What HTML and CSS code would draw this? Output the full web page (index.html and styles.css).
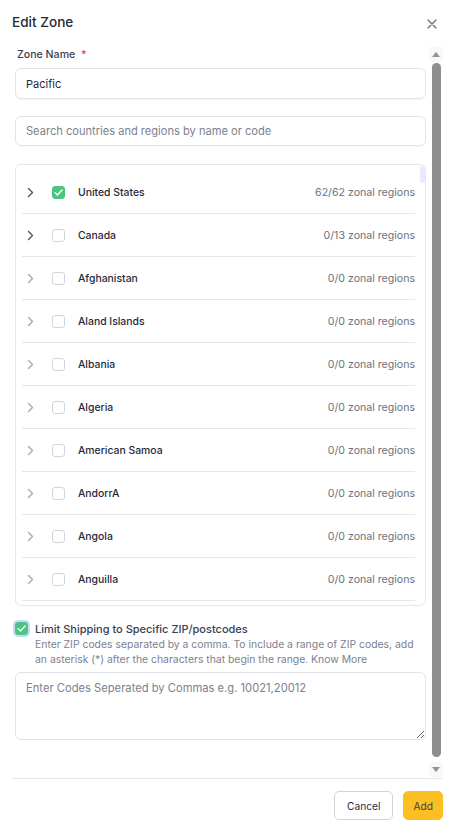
FILE: index.html
```html
<!DOCTYPE html>
<html>
<head>
<meta charset="utf-8">
<link rel="stylesheet" href="styles.css">
</head>
<body>
<div class="modal">
  <div class="header">
    <h1 class="title">Edit Zone</h1>
    <button class="close" aria-label="Close">
      <svg width="10" height="10" viewBox="0 0 10 10"><path d="M1 1L9 9M9 1L1 9" stroke="#6b7280" stroke-width="1.4" stroke-linecap="round"/></svg>
    </button>
  </div>
  <div class="main">
    <div class="content">
      <label class="label">Zone Name <span class="req">*</span></label>
      <div class="input">Pacific</div>
      <div class="input search">Search countries and regions by name or code</div>
      <div class="card">
        <div class="list">
          <div class="row"><span class="chev dark"><svg width="7" height="11" viewBox="0 0 7 11"><path d="M1.5 1.5L5.5 5.5L1.5 9.5" fill="none" stroke="currentColor" stroke-width="1.4" stroke-linecap="round" stroke-linejoin="round"/></svg></span><span class="cb checked"><svg width="9" height="7" viewBox="0 0 9 7"><path d="M1 3.6L3.4 6L8 1" fill="none" stroke="#fff" stroke-width="1.3" stroke-linecap="round" stroke-linejoin="round"/></svg></span><span class="name">United States</span><span class="count">62/62 zonal regions</span></div>
          <div class="row"><span class="chev dark"><svg width="7" height="11" viewBox="0 0 7 11"><path d="M1.5 1.5L5.5 5.5L1.5 9.5" fill="none" stroke="currentColor" stroke-width="1.4" stroke-linecap="round" stroke-linejoin="round"/></svg></span><span class="cb"></span><span class="name">Canada</span><span class="count">0/13 zonal regions</span></div>
          <div class="row"><span class="chev"><svg width="7" height="11" viewBox="0 0 7 11"><path d="M1.5 1.5L5.5 5.5L1.5 9.5" fill="none" stroke="currentColor" stroke-width="1.4" stroke-linecap="round" stroke-linejoin="round"/></svg></span><span class="cb"></span><span class="name">Afghanistan</span><span class="count">0/0 zonal regions</span></div>
          <div class="row"><span class="chev"><svg width="7" height="11" viewBox="0 0 7 11"><path d="M1.5 1.5L5.5 5.5L1.5 9.5" fill="none" stroke="currentColor" stroke-width="1.4" stroke-linecap="round" stroke-linejoin="round"/></svg></span><span class="cb"></span><span class="name">Aland Islands</span><span class="count">0/0 zonal regions</span></div>
          <div class="row"><span class="chev"><svg width="7" height="11" viewBox="0 0 7 11"><path d="M1.5 1.5L5.5 5.5L1.5 9.5" fill="none" stroke="currentColor" stroke-width="1.4" stroke-linecap="round" stroke-linejoin="round"/></svg></span><span class="cb"></span><span class="name">Albania</span><span class="count">0/0 zonal regions</span></div>
          <div class="row"><span class="chev"><svg width="7" height="11" viewBox="0 0 7 11"><path d="M1.5 1.5L5.5 5.5L1.5 9.5" fill="none" stroke="currentColor" stroke-width="1.4" stroke-linecap="round" stroke-linejoin="round"/></svg></span><span class="cb"></span><span class="name">Algeria</span><span class="count">0/0 zonal regions</span></div>
          <div class="row"><span class="chev"><svg width="7" height="11" viewBox="0 0 7 11"><path d="M1.5 1.5L5.5 5.5L1.5 9.5" fill="none" stroke="currentColor" stroke-width="1.4" stroke-linecap="round" stroke-linejoin="round"/></svg></span><span class="cb"></span><span class="name">American Samoa</span><span class="count">0/0 zonal regions</span></div>
          <div class="row"><span class="chev"><svg width="7" height="11" viewBox="0 0 7 11"><path d="M1.5 1.5L5.5 5.5L1.5 9.5" fill="none" stroke="currentColor" stroke-width="1.4" stroke-linecap="round" stroke-linejoin="round"/></svg></span><span class="cb"></span><span class="name">AndorrA</span><span class="count">0/0 zonal regions</span></div>
          <div class="row"><span class="chev"><svg width="7" height="11" viewBox="0 0 7 11"><path d="M1.5 1.5L5.5 5.5L1.5 9.5" fill="none" stroke="currentColor" stroke-width="1.4" stroke-linecap="round" stroke-linejoin="round"/></svg></span><span class="cb"></span><span class="name">Angola</span><span class="count">0/0 zonal regions</span></div>
          <div class="row"><span class="chev"><svg width="7" height="11" viewBox="0 0 7 11"><path d="M1.5 1.5L5.5 5.5L1.5 9.5" fill="none" stroke="currentColor" stroke-width="1.4" stroke-linecap="round" stroke-linejoin="round"/></svg></span><span class="cb"></span><span class="name">Anguilla</span><span class="count">0/0 zonal regions</span></div>
        </div>
        <span class="list-thumb"></span>
      </div>
      <div class="limit">
        <span class="cb checked focus"><svg width="9" height="7" viewBox="0 0 9 7"><path d="M1 3.6L3.4 6L8 1" fill="none" stroke="#fff" stroke-width="1.3" stroke-linecap="round" stroke-linejoin="round"/></svg></span>
        <div class="limit-text">
          <div class="limit-title">Limit Shipping to Specific ZIP/postcodes</div>
          <div class="limit-desc">Enter ZIP codes separated by a comma. To include a range of ZIP codes, add an asterisk (*) after the characters that begin the range. Know More</div>
        </div>
      </div>
      <textarea class="textarea" placeholder="Enter Codes Seperated by Commas e.g. 10021,20012"></textarea>
    </div>
    <div class="scrollbar" aria-hidden="true">
      <span class="sb-btn"><span class="arrow up"></span></span>
      <span class="sb-thumb"></span>
      <span class="sb-btn"><span class="arrow down"></span></span>
    </div>
  </div>
  <div class="footer">
    <button class="btn cancel">Cancel</button>
    <button class="btn add">Add</button>
  </div>
</div>
</body>
</html>
```
FILE: styles.css
```css
* { box-sizing: border-box; }
html, body { margin: 0; padding: 0; background: #fff; }
body { font-family: Inter, "Noto Sans", "Liberation Sans", sans-serif; color: #1f2937; }
.modal { width: 455px; height: 831px; display: flex; flex-direction: column; padding: 0 12px; }
.header { height: 45px; flex: none; display: flex; align-items: flex-start; justify-content: space-between; }
.title { margin: 13px 0 0 0; font-size: 13.6px; font-weight: 500; color: #1f2937; line-height: 18px; }
.close { margin: 19px 6px 0 0; padding: 0; border: 0; background: none; width: 10px; height: 10px; display: flex; }
.main { height: 733px; flex: none; display: flex; }
.content { flex: 1; min-width: 0; overflow: hidden; padding: 3px 3px 0 3px; display: flex; flex-direction: column; }
.label { font-size: 10.6px; font-weight: 500; color: #374151; line-height: 14px; padding-left: 2px; }
.req { color: #ef4444; margin-left: 3px; }
.input { margin-top: 6px; height: 31px; flex: none; border: 1px solid #e0e3e8; border-radius: 6px; font-size: 11px; color: #1f2937; padding: 0 10px; display: flex; align-items: center; box-shadow: 0 1px 1px rgba(0,0,0,0.03); }
.search { margin-top: 17px; height: 30px; color: #7b8190; font-size: 11.1px; }
.card { position: relative; margin-top: 18px; flex: none; border: 1px solid #e5e7eb; border-radius: 6px; height: 442px; overflow: hidden; }
.list { height: 440px; overflow: hidden; padding: 6px 10px 0 6px; }
.list-thumb { position: absolute; right: 0; top: 1px; width: 5px; height: 17px; border-radius: 3px; background: #e8ebfb; }
.row { height: 43px; border-bottom: 1px solid #e5e7eb; display: flex; align-items: center; font-size: 10.6px; }
.chev { width: 7px; margin-left: 5px; color: #a3a8b1; display: flex; }
.chev.dark { color: #4b5563; }
.cb { width: 13px; height: 13px; border: 1px solid #d1d5db; border-radius: 3px; background: #fff; flex: none; display: flex; align-items: center; justify-content: center; }
.row .cb { margin-left: 18px; }
.cb.checked { background: #4cc483; border-color: #4cc483; }
.name { margin-left: 13px; font-weight: 500; color: #1f2937; font-size: 10.4px; }
.count { margin-left: auto; color: #6b7280; }
.limit { display: flex; align-items: flex-start; margin-top: 15px; }
.cb.focus { margin-top: 1px; box-shadow: 0 0 0 2px #c7dbfb; }
.limit-text { margin-left: 7px; min-width: 0; }
.limit-title { font-size: 11px; font-weight: 500; color: #374151; line-height: 16px; }
.limit-desc { font-size: 10.4px; color: #7b8190; line-height: 15px; }
.textarea { margin-top: 5px; height: 68px; flex: none; border: 1px solid #e0e3e8; border-radius: 6px; font-family: inherit; font-size: 11.2px; padding: 8px 10px; resize: vertical; outline: none; }
.textarea::placeholder { color: #7b8190; }
.scrollbar { width: 14px; flex: none; display: flex; flex-direction: column; align-items: center; }
.sb-btn { width: 14px; height: 15px; flex: none; display: flex; align-items: center; justify-content: center; background: #f8f8f8; }
.arrow { width: 0; height: 0; border-left: 4.5px solid transparent; border-right: 4.5px solid transparent; }
.arrow.up { border-bottom: 5px solid #929292; }
.arrow.down { border-top: 5px solid #929292; }
.sb-btn:first-child { margin-top: 2px; }
.sb-thumb { flex: 1; width: 9px; margin: 1px 0 5px 0; border-radius: 4.5px; background: #8e8e8e; }
.sb-btn:last-child { margin-bottom: 1px; }
.footer { flex: none; border-top: 1px solid #e5e7eb; display: flex; justify-content: flex-end; gap: 10px; padding-top: 12px; }
.btn { height: 29px; border-radius: 5px; font-family: inherit; font-size: 10.2px; }
.cancel { background: #fff; border: 1px solid #d1d5db; color: #1e2a4a; padding: 0 12px; }
.add { background: #fbbf24; border: 1px solid #fbbf24; color: #3f3f46; padding: 0 9px; }
```
